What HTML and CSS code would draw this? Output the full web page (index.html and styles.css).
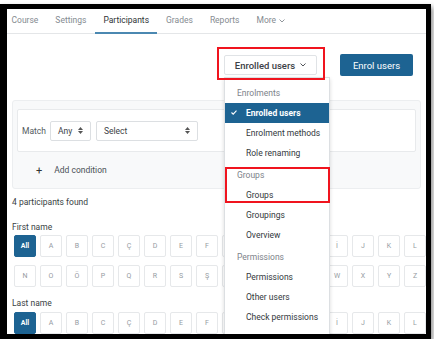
FILE: index.html
```html
<!DOCTYPE html>
<html lang="en">
<head>
  <meta charset="UTF-8">
  <title>Participants</title>
  <link rel="stylesheet" href="styles.css">
</head>
<body>
  <div class="frame">
    <div class="page">
      <nav class="tabs">
        <span class="tab">Course</span>
        <span class="tab">Settings</span>
        <span class="tab active">Participants</span>
        <span class="tab">Grades</span>
        <span class="tab">Reports</span>
        <span class="tab">More <svg class="chev" width="6" height="4" viewBox="0 0 6 4"><polyline points="0.5,0.5 3,3 5.5,0.5" fill="none" stroke="currentColor" stroke-width="0.9"/></svg></span>
      </nav>

      <div class="actions">
        <div class="dd">
          <div class="hl hl-btn"></div>
          <button class="btn-outline">Enrolled users <svg class="chev" width="6" height="4" viewBox="0 0 6 4"><polyline points="0.5,0.5 3,3 5.5,0.5" fill="none" stroke="currentColor" stroke-width="0.9"/></svg></button>
          <div class="menu">
            <div class="menu-head">Enrolments</div>
            <div class="menu-item current">
              <svg class="check" width="6" height="5" viewBox="0 0 6 5"><polyline points="0.5,2.5 2.2,4.2 5.5,0.6" fill="none" stroke="#fff" stroke-width="1.1"/></svg>
              Enrolled users
            </div>
            <div class="menu-item">Enrolment methods</div>
            <div class="menu-item">Role renaming</div>
            <div class="menu-head group">Groups</div>
            <div class="menu-item">Groups</div>
            <div class="menu-item">Groupings</div>
            <div class="menu-item">Overview</div>
            <div class="menu-head group">Permissions</div>
            <div class="menu-item">Permissions</div>
            <div class="menu-item">Other users</div>
            <div class="menu-item">Check permissions</div>
            <div class="menu-head group">Locally assigned roles</div>
            <div class="hl hl-groups"></div>
          </div>
        </div>
        <button class="btn-primary">Enrol users</button>
      </div>

      <div class="filter">
        <div class="filter-row">
          <span>Match</span>
          <span class="select sel-any">Any <svg width="5" height="7" viewBox="0 0 5 7"><polygon points="0,3 2.5,0 5,3" fill="#555"/><polygon points="0,4 2.5,7 5,4" fill="#555"/></svg></span>
          <span class="select sel-type">Select <svg width="5" height="7" viewBox="0 0 5 7"><polygon points="0,3 2.5,0 5,3" fill="#555"/><polygon points="0,4 2.5,7 5,4" fill="#555"/></svg></span>
        </div>
        <div class="add-row"><span class="plus">+</span>Add condition</div>
      </div>

      <div class="found">4 participants found</div>

      <div class="label first">First name</div>
      <div class="letters">
        <span class="on">All</span><span>A</span><span>B</span><span>C</span><span>Ç</span><span>D</span><span>E</span><span>F</span><span>G</span><span>Ğ</span><span>H</span><span>I</span><span>İ</span><span>J</span><span>K</span><span>L</span><span>M</span>
      </div>
      <div class="letters second">
        <span>N</span><span>O</span><span>Ö</span><span>P</span><span>Q</span><span>R</span><span>S</span><span>Ş</span><span>T</span><span>U</span><span>Ü</span><span>V</span><span>W</span><span>X</span><span>Y</span><span>Z</span>
      </div>

      <div class="label last">Last name</div>
      <div class="letters">
        <span class="on">All</span><span>A</span><span>B</span><span>C</span><span>Ç</span><span>D</span><span>E</span><span>F</span><span>G</span><span>Ğ</span><span>H</span><span>I</span><span>İ</span><span>J</span><span>K</span><span>L</span><span>M</span>
      </div>
    </div>
  </div>
</body>
</html>
```

FILE: styles.css
```css
* { box-sizing: border-box; }
body {
  margin: 0;
  background: #fff;
  font-family: Roboto, "Liberation Sans", sans-serif;
  color: #3a3f44;
}
.frame {
  width: 431px;
  height: 335px;
  margin-top: 4px;
  border: 5px solid #000;
  border-left-width: 7px;
  background: #fff;
  box-shadow: 2px 3px 5px rgba(0, 0, 0, 0.45);
}
.page {
  position: relative;
  height: 100%;
  overflow: hidden;
}
.tabs {
  display: flex;
  height: 25px;
  margin-left: -4px;
  border-bottom: 1px solid #e4e6e8;
  font-size: 8.5px;
  color: #858b91;
}
.tab {
  position: relative;
  padding: 0 8.5px;
  line-height: 23px;
}
.tab.active { color: #2f3337; }
.tab.active::after {
  content: "";
  position: absolute;
  left: 0;
  right: 1px;
  bottom: -1px;
  height: 2px;
  background: #4b88b1;
}
.chev { vertical-align: middle; margin-left: 1px; }

.actions {
  display: flex;
  justify-content: flex-end;
  align-items: center;
  gap: 23px;
  height: 22px;
  margin-top: 20px;
  padding-right: 13px;
}
.dd { position: relative; }
button {
  font-family: inherit;
  cursor: pointer;
  border-radius: 2px;
}
.btn-outline {
  display: flex;
  align-items: center;
  justify-content: center;
  gap: 4px;
  width: 93px;
  height: 20px;
  padding: 0;
  border: 1px solid #e0e3e6;
  background: #fff;
  color: #3c4146;
  font-size: 9.5px;
  font-weight: 500;
}
.btn-primary {
  width: 73px;
  height: 22px;
  padding: 0;
  border: none;
  background: #1d6392;
  color: #fff;
  font-size: 9.5px;
}
.hl {
  position: absolute;
  border: 2px solid #f0141e;
  z-index: 3;
}
.hl-btn { top: -8px; left: -7px; right: -8px; bottom: -5px; }
.menu {
  position: absolute;
  top: 22px;
  left: 0;
  width: 106px;
  padding: 5px 0;
  background: #fff;
  border: 1px solid #dcdfe2;
  box-shadow: 0 2px 4px rgba(0, 0, 0, 0.15);
  font-size: 8.5px;
  z-index: 2;
}
.menu-head {
  height: 20px;
  line-height: 20px;
  padding-left: 12px;
  color: #7d838a;
}
.menu-head.group { margin-top: 2px; }
.menu-item {
  position: relative;
  height: 20px;
  line-height: 20px;
  padding-left: 21px;
  color: #33383d;
}
.menu-item.current {
  background: #1d6392;
  color: #fff;
  font-weight: bold;
}
.check { position: absolute; left: 6px; top: 7px; }
.hl-groups { top: 89px; left: 0; width: 105px; height: 36px; }

.filter {
  width: 409px;
  margin: 24px 0 0 5px;
  padding: 8px 4px 0;
  background: #f8f9fa;
  border: 1px solid #eceef0;
  border-radius: 3px;
  font-size: 8.5px;
}
.filter-row {
  display: flex;
  align-items: center;
  gap: 4px;
  height: 43px;
  padding-left: 4px;
  background: #fff;
  border: 1px solid #e8eaec;
  border-radius: 2px;
  color: #555b61;
}
.select {
  display: flex;
  align-items: center;
  justify-content: space-between;
  height: 20px;
  padding: 0 7px;
  border: 1px solid #dcdfe2;
  border-radius: 2px;
  color: #3c4146;
}
.sel-any { width: 41px; }
.sel-type { width: 102px; margin-left: 1px; }
.add-row {
  display: flex;
  align-items: center;
  height: 36px;
  padding-left: 19px;
  color: #4a5056;
}
.plus { font-size: 11px; margin-right: 12px; color: #333; }

.found {
  margin-top: 7px;
  padding-left: 5px;
  line-height: 12px;
  font-size: 8.5px;
  color: #3a3f44;
}
.label {
  padding-left: 5px;
  line-height: 12px;
  font-size: 8.5px;
  color: #3a3f44;
}
.label.first { margin-top: 13px; }
.label.last { margin-top: 10px; }
.letters {
  display: flex;
  gap: 4px;
  margin-top: 2px;
  padding-left: 7px;
  white-space: nowrap;
}
.letters.second { margin-top: 8px; }
.label.last + .letters { margin-top: 3px; }
.letters span {
  flex: none;
  display: flex;
  align-items: center;
  justify-content: center;
  width: 22px;
  height: 22px;
  border: 1px solid #e6e8ea;
  border-radius: 2px;
  font-size: 7px;
  color: #959ba1;
}
.letters span.on {
  background: #1d6392;
  border-color: #1d6392;
  color: #fff;
  font-weight: bold;
}
```
